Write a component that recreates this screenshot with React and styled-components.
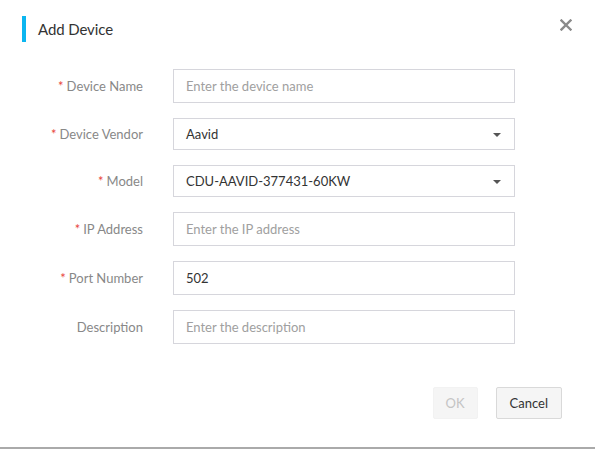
import React from "react";
import styled, { createGlobalStyle } from "styled-components";

const Global = createGlobalStyle`
  html, body { margin: 0; padding: 0; background: #fff; }
  body { font-family: "Lato", "Liberation Sans", sans-serif; }
  * { box-sizing: border-box; }
`;

const Dialog = styled.div`
  width: 595px;
  height: 449px;
  background: #fff;
  border-bottom: 2px solid #aaaaaa;
  display: flex;
  flex-direction: column;
  position: relative;
`;

const Header = styled.div`
  display: flex;
  align-items: center;
  height: 26px;
  margin: 16px 0 0 22px;
`;

const Bar = styled.span`
  width: 4px;
  height: 26px;
  background: #0cb6f0;
  margin-right: 12px;
`;

const Title = styled.span`
  font-size: 15px;
  color: #333;
  letter-spacing: -0.1px;
`;

const Close = styled.button`
  position: absolute;
  top: 19px;
  left: 560px;
  width: 12px;
  height: 12px;
  padding: 0;
  border: 0;
  background: none;
  display: flex;
`;

const Form = styled.div`
  margin-top: 27px;
  display: flex;
  flex-direction: column;
  gap: 15px;
`;

const Row = styled.div`
  display: grid;
  grid-template-columns: 143px 342px;
  column-gap: 30px;
  align-items: center;
`;

const Label = styled.label`
  text-align: right;
  font-size: 13px;
  color: #888;
  white-space: nowrap;
`;

const Star = styled.span`
  color: #e8463c;
  margin-right: 3px;
`;

const Field = styled.div`
  height: ${(p) => (p.$select ? 32 : 34)}px;
  border: 1px solid #d6d6dc;
  display: flex;
  align-items: center;
  justify-content: space-between;
  padding: 0 13px 0 12px;
  font-size: 13px;
  color: ${(p) => (p.$placeholder ? "#a0a0a0" : "#333")};
`;

const Caret = styled.span`
  width: 0;
  height: 0;
  border-left: 4px solid transparent;
  border-right: 4px solid transparent;
  border-top: 4px solid #555;
  margin-top: 1px;
`;

const Footer = styled.div`
  display: flex;
  justify-content: flex-end;
  gap: 18px;
  margin-top: 43px;
  padding-right: 33px;
`;

const Button = styled.button`
  height: 32px;
  padding: 0 ${(p) => p.$pad}px;
  font-family: inherit;
  font-size: 13px;
  border-radius: 2px;
  background: #f5f5f5;
  border: 1px solid ${(p) => (p.$disabled ? "#f2f2f2" : "#d9d9d9")};
  color: ${(p) => (p.$disabled ? "#c4c4c4" : "#333")};
`;

const rows = [
  { label: "Device Name", req: true, value: "Enter the device name", ph: true },
  { label: "Device Vendor", req: true, value: "Aavid", select: true },
  { label: "Model", req: true, value: "CDU-AAVID-377431-60KW", select: true },
  { label: "IP Address", req: true, value: "Enter the IP address", ph: true },
  { label: "Port Number", req: true, value: "502" },
  { label: "Description", req: false, value: "Enter the description", ph: true },
];

export default function App() {
  return (
    <>
      <Global />
      <Dialog>
        <Header>
          <Bar />
          <Title>Add Device</Title>
        </Header>
        <Close aria-label="close">
          <svg width="12" height="12" viewBox="0 0 12 12">
            <path d="M1.5 1.5 L10.5 10.5 M10.5 1.5 L1.5 10.5" stroke="#8a8a8a" strokeWidth="2.4" strokeLinecap="square" />
          </svg>
        </Close>
        <Form>
          {rows.map((r) => (
            <Row key={r.label}>
              <Label>
                {r.req && <Star>*</Star>}
                {r.label}
              </Label>
              <Field $select={r.select} $placeholder={r.ph}>
                <span>{r.value}</span>
                {r.select && <Caret />}
              </Field>
            </Row>
          ))}
        </Form>
        <Footer>
          <Button $disabled $pad={12}>OK</Button>
          <Button $pad={13}>Cancel</Button>
        </Footer>
      </Dialog>
    </>
  );
}
